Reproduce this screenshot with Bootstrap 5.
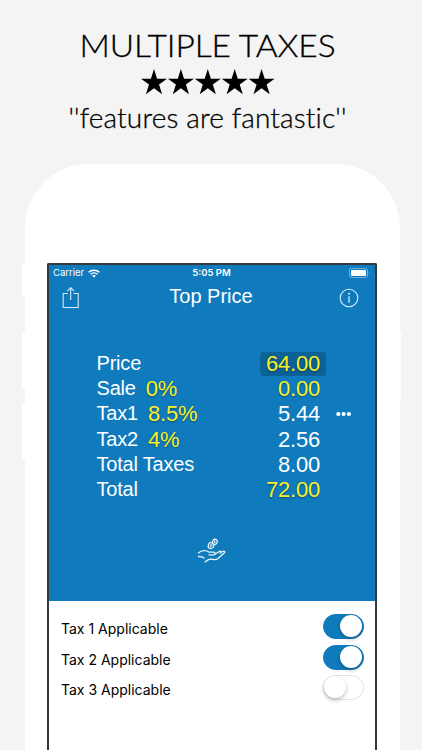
<!DOCTYPE html>
<html lang="en">
<head>
<meta charset="utf-8">
<meta name="viewport" content="width=device-width, initial-scale=1">
<title>Top Price</title>
<link href="https://cdn.jsdelivr.net/npm/bootstrap@5.3.0/dist/css/bootstrap.min.css" rel="stylesheet">
<style>
body{background:#f4f4f4;height:750px;color:#000}
.promo{height:164px;padding:26px 7px 0 0;font-family:Lato,sans-serif;font-weight:300;white-space:nowrap;-webkit-text-stroke:.3px #000}
.promo h1{font-size:31px;line-height:38px;font-weight:300;letter-spacing:-.1px;transform:scaleX(1.08)}
.stars{height:26px;margin-top:5px}
.promo p{font-size:28px;line-height:36px;margin-top:4px;letter-spacing:.15px}
.phone{width:375px;margin-left:24.5px;height:586px;background:#fff;border-radius:64px 64px 0 0;padding:99px 22.5px 0}
.side-key{background:#fff;width:3px}
.screen{height:487px;border:2px solid #343a3d;border-bottom:0;border-radius:2px 2px 0 0;background:#fff}
.panel{background:#107bbc;color:#fff;height:336px}
.status{height:16px;padding:0 5px 0 4px;font:9.5px/16px Inter,sans-serif;display:grid;grid-template-columns:1fr auto 1fr}
.clock{font-weight:600}
.topbar{height:34px;padding:0 16px 0 13px;font:20px/31px "Liberation Sans",Arial,sans-serif}
.topbar span{padding:0 0 3px 3px}
.figures{padding:36px 55px 0 47.5px;font:20px/25.2px "Liberation Sans",Arial,sans-serif}
.line{height:25.2px}
.tag{letter-spacing:-.2px}
.num{font-size:22px;letter-spacing:-.2px}
.rate{padding-left:10px}
.hi{color:#f8f129;text-shadow:0 1px 2px #0006}
.picked{background:#0c6297;border-radius:4px;padding:0 6px;margin-right:-6px;line-height:24px}
.hand{margin-top:36px}
.options{padding:13px 11px 0 12px;font:14px/30px Inter,sans-serif}
.option{height:30.4px}
.form-switch .form-check-input.tax-switch{width:41px;height:25px;margin:0 0 5px;float:none;border:1.5px solid #e3e3e3;background:#fff;flex:none}
.tax-switch::before{content:"";display:block;width:22px;height:22px;border-radius:50%;background:#fff;box-shadow:0 2px 4px #0004}
.form-switch .form-check-input.tax-switch:checked{background:#107bbc;border-color:#107bbc}
.tax-switch:checked::before{margin-left:16px}
</style>
</head>
<body class="overflow-hidden position-relative">
<header class="promo text-center">
<h1 class="mb-0">MULTIPLE TAXES</h1>
<svg class="stars d-block mx-auto" width="134" height="26" viewBox="0 0 134 26"><defs><path id="star" d="M13 0l3.1 9.8H26l-8 5.8 3.1 9.6L13 19.2l-8.1 6 3.1-9.6-8-5.8h9.9z"/></defs><use href="#star" x="0"/><use href="#star" x="26.9"/><use href="#star" x="53.8"/><use href="#star" x="80.7"/><use href="#star" x="107.6"/></svg>
<p class="mb-0">''features are fantastic''</p>
</header>
<div class="side-key position-absolute" style="left:22px;top:264px;height:32px"></div>
<div class="side-key position-absolute" style="left:22px;top:332px;height:57px"></div>
<div class="side-key position-absolute" style="left:22px;top:403px;height:57px"></div>
<div class="side-key position-absolute" style="left:398px;top:332px;height:68px"></div>
<main class="phone">
<div class="screen">
<section class="panel">
<div class="status">
<div class="d-flex align-items-center"><span>Carrier</span>
<svg class="ms-1" width="12" height="9" viewBox="0 0 12 9" fill="none" stroke="#fff" stroke-width="1.5"><path d="M.6 3.3a7.8 7.8 0 0 1 10.8 0M2.6 5.3a5 5 0 0 1 6.8 0"/><path d="M6 8.6L4.1 6.8a2.8 2.8 0 0 1 3.8 0z" fill="#fff" stroke="none"/></svg></div>
<span class="clock">5:05 PM</span>
<div class="d-flex align-items-center justify-content-end"><svg width="21" height="10" viewBox="0 0 21 10"><rect x=".5" y=".5" width="18" height="9" rx="2" fill="none" stroke="#fff" stroke-opacity=".4"/><rect x="2" y="2" width="15" height="6" rx="1" fill="#fff"/><path d="M20 3.5q1 1.5 0 3z" fill="#fff" opacity=".5"/></svg></div>
</div>
<div class="topbar d-flex justify-content-between align-items-center">
<svg width="18" height="23" viewBox="0 0 18 23" fill="none" stroke="#d4ecfa" stroke-width="1.1"><path d="M6 6.500H1.200v14h15v-14h-4.800M8.700 13V.8M5.300 4.100l3.400-3.400 3.400 3.400"/></svg>
<span>Top Price</span>
<svg width="20" height="20" viewBox="0 0 20 20" fill="none" stroke="#d4ecfa"><circle cx="10" cy="10" r="8.800" stroke-width="1.100"/><path d="M10 8.200v6.600" stroke-width="1.300"/><circle cx="10" cy="5.800" r="1" fill="#d4ecfa" stroke="none"/></svg>
</div>
<div class="figures">
<div class="line d-flex justify-content-between align-items-center"><span class="tag">Price</span><span class="num hi picked">64.00</span></div>
<div class="line d-flex align-items-center"><span class="tag">Sale</span><span class="num hi rate">0%</span><span class="num hi ms-auto">0.00</span></div>
<div class="line d-flex align-items-center position-relative"><span class="tag">Tax1</span><span class="num hi rate">8.5%</span><span class="num ms-auto">5.44</span>
<svg class="position-absolute start-100 ms-3" width="16" height="6" viewBox="0 0 16 6" fill="#fff"><circle cx="2.300" cy="3" r="2.100"/><circle cx="7.600" cy="3" r="2.100"/><circle cx="12.900" cy="3" r="2.100"/></svg></div>
<div class="line d-flex align-items-center"><span class="tag">Tax2</span><span class="num hi rate">4%</span><span class="num ms-auto">2.56</span></div>
<div class="line d-flex justify-content-between align-items-center"><span class="tag">Total Taxes</span><span class="num">8.00</span></div>
<div class="line d-flex justify-content-between align-items-center"><span class="tag">Total</span><span class="num hi">72.00</span></div>
</div>
<svg class="d-block mx-auto hand" width="30" height="26" viewBox="0 0 30 26" fill="none" stroke="#e4f4fc" stroke-width="1.3" stroke-linecap="round" stroke-linejoin="round"><path d="M1.500 15c3-3 8-3 10.500-.8h4.500c2.300.2 2 2.600 0 2.700h-4.500M17.800 16.300l4.500-2.800c1.500-.8 2.500.5 1.400 1.400M23 15l3-1.700c1.500-.6 2.300.5 1.400 1.500L21 20.500c-3 2.500-6.500-.2-9.500 1.100L8 24M1.500 18.500c2.500 0 4 .2 5.500 1.500"/><ellipse cx="14" cy="7.500" rx="2.700" ry="3.100" transform="rotate(15 14 7.500)"/><ellipse cx="17.800" cy="3.900" rx="2.300" ry="2.700" transform="rotate(25 17.800 3.900)"/><path d="M14 6.300v2.400M17.800 3v1.500"/></svg>
</section>
<section class="options">
<label class="option d-flex justify-content-between align-items-center form-switch p-0"><span>Tax 1 Applicable</span><input class="form-check-input tax-switch" type="checkbox" role="switch" checked></label>
<label class="option d-flex justify-content-between align-items-center form-switch p-0"><span>Tax 2 Applicable</span><input class="form-check-input tax-switch" type="checkbox" role="switch" checked></label>
<label class="option d-flex justify-content-between align-items-center form-switch p-0"><span>Tax 3 Applicable</span><input class="form-check-input tax-switch" type="checkbox" role="switch"></label>
</section>
</div>
</main>
<script src="https://cdn.jsdelivr.net/npm/bootstrap@5.3.0/dist/js/bootstrap.bundle.min.js"></script>
</body>
</html>
